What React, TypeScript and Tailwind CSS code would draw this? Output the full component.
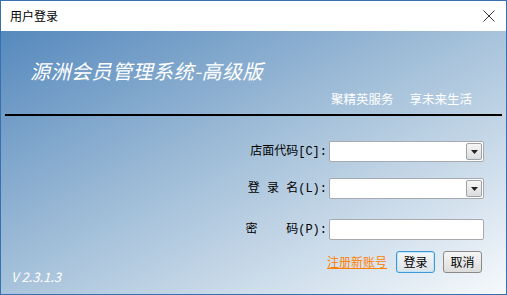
import { useState } from 'react';

const cjk = "font-['Noto_Sans_CJK_SC','Noto_Sans',sans-serif]";

function Combo() {
  return (
    <div className="flex h-[21px] w-[155px] items-stretch rounded-[2px] border border-[#a6a9ae] bg-white">
      <div className="flex-1" />
      <div className="my-[1px] mr-[1px] flex w-[16px] items-center justify-center rounded-[2px] border border-[#9ea3a9] bg-[linear-gradient(#f6f6f6,#dcdcdc)]">
        <svg width="7" height="4" viewBox="0 0 7 4">
          <path d="M0 0h7L3.5 4z" fill="#222" />
        </svg>
      </div>
    </div>
  );
}

function Row({ label, children }: { label: React.ReactNode; children: React.ReactNode }) {
  return (
    <div className="flex items-center">
      <div className="w-[84px] whitespace-pre pr-[2px] text-right font-['Liberation_Mono','Noto_Sans_CJK_SC',monospace] text-[12px] text-black">
        {label}
      </div>
      {children}
    </div>
  );
}

export default function App() {
  const [pwd, setPwd] = useState('');
  return (
    <div className={`flex h-[295px] w-[507px] flex-col border border-[#3670b0] ${cjk}`}>
      <div className="flex h-[30px] shrink-0 items-center justify-between bg-white pl-[9px] pr-[10px]">
        <span className="text-[12px] text-black">用户登录</span>
        <svg width="12" height="12" viewBox="0 0 12 12" className="mr-[1px]">
          <path d="M0.5 0.5L11.5 11.5M11.5 0.5L0.5 11.5" stroke="#333" strokeWidth="1" />
        </svg>
      </div>
      <div className="flex flex-1 flex-col bg-[linear-gradient(to_bottom_right,#5689bd_0%,#a8c3db_50%,#f6f9fc_100%)]">
        <div className="pl-[29px] pt-[26px] text-[20px] italic leading-[28px] tracking-[0.5px] text-white">
          源洲会员管理系统-高级版
        </div>
        <div className="flex justify-end gap-[16px] pr-[34px] pt-[5px] text-[12.5px] leading-[18px] text-white">
          <span>聚精英服务</span>
          <span>享未来生活</span>
        </div>
        <div className="mx-[4px] mt-[6px] h-[2px] bg-black" />
        <div className="flex flex-col items-end gap-[16px] pr-[22px] pt-[25px]">
          <Row label="店面代码[C]:">
            <Combo />
          </Row>
          <Row label="登 录 名(L):">
            <Combo />
          </Row>
          <div className="mt-[4px]">
            <Row label={'密    码(P):'}>
              <input
                type="password"
                value={pwd}
                onChange={(e) => setPwd(e.target.value)}
                className="h-[21px] w-[155px] rounded-[2px] border border-[#a6a9ae] bg-white outline-none"
              />
            </Row>
          </div>
        </div>
        <div className="flex flex-1 items-end justify-between pb-[8px] pl-[10px] pr-[24px]">
          <span className="text-[13px] italic leading-[18px] text-white">V 2.3.1.3</span>
          <div className="mb-[13px] flex items-center">
            <a className="mr-[9px] text-[12px] text-[#ff8000] underline">注册新账号</a>
            <button className="mr-[8px] h-[22px] w-[39px] rounded-[3px] border border-[#3c9ad8] bg-[linear-gradient(#f4f6f8,#dde3e9)] text-[12px] text-black shadow-[inset_0_0_0_1px_#bfe3f7]">
              登录
            </button>
            <button className="h-[22px] w-[39px] rounded-[3px] border border-[#8a8a8a] bg-[linear-gradient(#f6f6f6,#dcdcdc)] text-[12px] text-black">
              取消
            </button>
          </div>
        </div>
      </div>
    </div>
  );
}
